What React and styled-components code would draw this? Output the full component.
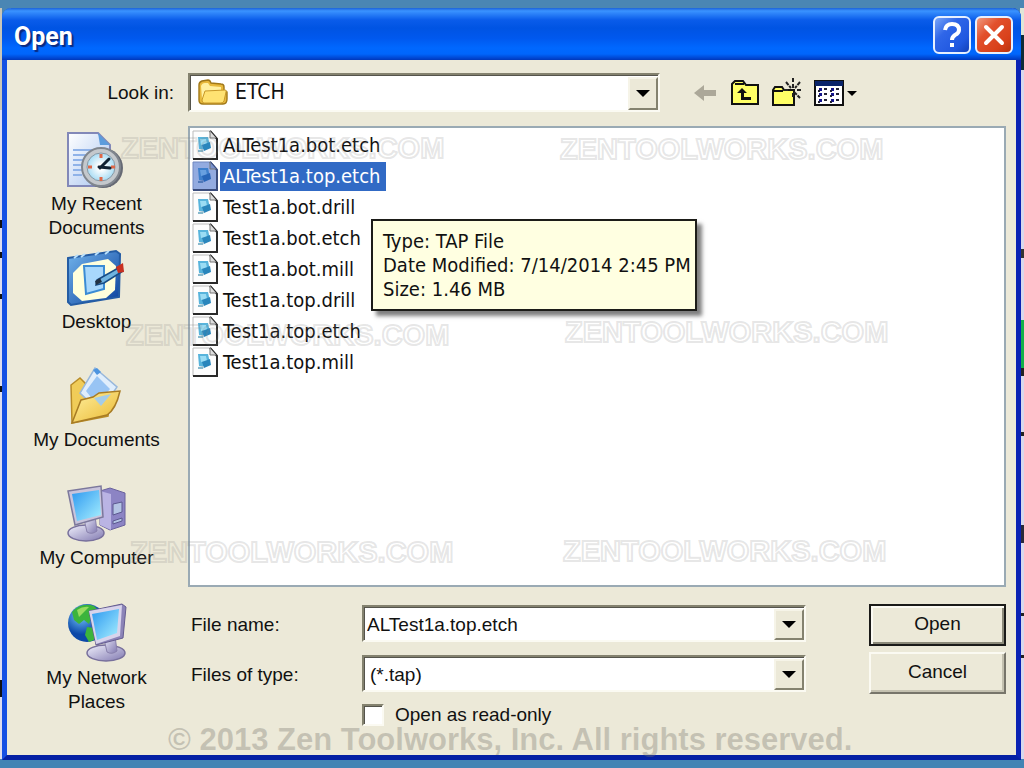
import React, { useState } from 'react';
import styled, { createGlobalStyle, css } from 'styled-components';

const GlobalStyle = createGlobalStyle`
    *, *::before, *::after{
        box-sizing: border-box;
    }
    body{
        margin: 0;
        background: #4a86b4;
        color: #111;
        font-family: 'Liberation Sans', Arial, sans-serif;
        font-size: 19px;
    }
    button, input, select{
        font: inherit;
        color: inherit;
    }
`

const Screen = styled.div`
    display: flex;
    flex-direction: column;
    min-height: 100vh;
    padding: 8px 3px 8px 2px;
    background:
        linear-gradient(#4a86b4, #4a86b4) top / 100% 8px no-repeat,
        linear-gradient(#4384b4, #4384b4) bottom / 100% 9px no-repeat,
        linear-gradient(#c9c6b8 0 110px, #dcdcee 110px 220px, #111 220px 228px, #dcdcee 228px 252px, #111 252px 258px, #dcdcee 258px 294px, #111 294px 299px, #dcdcee 299px 386px, #111 386px 392px, #dcdcee 392px 680px, #111 680px 697px, #dcdcee 697px) left / 2px 100% no-repeat,
        linear-gradient(#dfe6d8 0 35px, #0d2c38 35px 70px, #d8d8ec 70px 249px, #333 249px 258px, #d8d8ec 258px 320px, #12b04a 320px 368px, #222 368px 376px, #d8d8ec 376px 432px, #222 432px 436px, #d8d8ec 436px 525px, #2a2a3a 525px 543px, #d8d8ec 543px 613px, #222 613px 616px, #d8d8ec 616px 655px, #222 655px 658px, #d8d8ec 658px) right / 4px 100% no-repeat,
        #4a86b4;
`

const Dialog = styled.main`
    position: relative;
    display: flex;
    flex-direction: column;
    flex: 1;
    border: solid;
    border-width: 0 5px 5px 5px;
    border-color: #0a2fc0 #0a22b4 #0420a4 #1450e4;
    border-radius: 9px 9px 0 0;
    background: #ece9d8;
`

const TitleBar = styled.header`
    display: flex;
    align-items: center;
    gap: 4px;
    height: 52px;
    margin: 0 -5px;
    padding: 2px 8px 0 12px;
    border-radius: 9px 9px 0 0;
    background: linear-gradient(#1c62d8 0, #3a93ff 3px, #2a80f8 6px, #0a5cea 12px, #0054e3 20px, #0058ee 30px, #0068ff 40px, #0066fc 46px, #003fc8 51px, #0038b8 52px);
`

const Title = styled.h1`
    flex: 1;
    margin: 0;
    padding-top: 4px;
    color: #fff;
    font: bold 25px/32px Roboto, sans-serif;
    text-shadow: 2px 2px 1px #0a2a80;
`

const CaptionButton = styled.button`
    display: flex;
    align-items: center;
    justify-content: center;
    width: 38px;
    height: 38px;
    padding: 0;
    border: 2px solid #e6f0ff;
    border-radius: 6px;
    background: ${props => props.$close
        ? 'linear-gradient(135deg, #f09a80, #e2502c 35%, #d8401a 75%, #b83410)'
        : 'linear-gradient(135deg, #7aa6f8, #2f66e8 35%, #2058e0 75%, #1240b8)'};
`

const Body = styled.div`
    display: grid;
    grid-template-columns: 181px minmax(0, 1fr);
    grid-template-rows: 39px 1fr;
    row-gap: 14px;
    flex: 1;
    padding: 13px 10px 4px 0;
`

const LookLabel = styled.label`
    justify-self: end;
    align-self: center;
    padding-right: 14px;
`

const LookRow = styled.div`
    display: flex;
    align-items: center;
    gap: 33px;
`

const sunken = css`
    border: 2px solid;
    border-color: #84826f #fbfaf2 #fbfaf2 #84826f;
    box-shadow: inset 1px 1px 0 #55544c;
    background: #fff;
`

const Combo = styled.div`
    ${sunken}
    position: relative;
    display: flex;
    height: ${props => props.$height || '37px'};
    padding: 2px 0 0 2px;

    select, input{
        flex: 1;
        min-width: 0;
        padding: 0 0 0 ${props => props.$indent || '1px'};
        border: 0;
        outline: 0;
        background: none;
        appearance: none;
    }
    > svg:first-child{
        position: absolute;
        left: 7px;
        top: 3px;
    }
`

const ComboArrow = styled.span`
    display: flex;
    align-items: center;
    justify-content: center;
    width: 30px;
    border: 2px solid;
    border-color: #f6f4e8 #84826f #84826f #f6f4e8;
    background: #ece9d8;
    pointer-events: none;

    &::before{
        content: '';
        border: 7px solid transparent;
        border-top-color: #000;
        border-bottom: 0;
    }
`

const LookCombo = styled(Combo)`
    flex: 0 1 472px;
    select{
        padding-bottom: 3px;
        font-family: 'DejaVu Sans Condensed', sans-serif;
        font-size: 21px;
    }
`

const Tools = styled.div`
    display: flex;
    align-items: center;
    gap: 11px;
`

const ToolButton = styled.button`
    display: flex;
    padding: 0;
    border: 0;
    background: none;
`

const Places = styled.nav`
    display: flex;
    flex-direction: column;
    padding-top: 4px;
`

const Place = styled.a`
    display: flex;
    flex-direction: column;
    align-items: center;
    height: 118px;
    padding-right: 2px;
    color: inherit;
    line-height: 24px;
    text-align: center;
    text-decoration: none;
    white-space: pre-line;

    svg{
        display: block;
        flex: none;
        margin: 1px 0 3px;
    }
`

const Main = styled.div`
    display: flex;
    flex-direction: column;
    gap: 17px;
`

const FileList = styled.ul`
    position: relative;
    flex: 1;
    min-height: 280px;
    margin: 0;
    padding: 2px;
    border: 2px solid #9aaab4;
    background: #fff;
    list-style: none;
`

const FileRow = styled.li`
    display: flex;
    align-items: center;
    height: 31px;
    font: 20px/29px 'DejaVu Sans Condensed', sans-serif;

    svg{
        flex: none;
    }
    span{
        margin-left: 1px;
        padding: 0 6px 0 3px;
        color: ${props => props.$selected ? '#fff' : 'inherit'};
        background: ${props => props.$selected ? '#316ac5' : 'none'};
    }
`

const Tooltip = styled.div`
    position: absolute;
    left: 181px;
    top: 91px;
    padding: 8px 4px 8px 10px;
    border: 2px solid #1c1c18;
    background: #ffffe1;
    box-shadow: 5px 5px 4px rgba(0, 0, 0, .5);
    font: 20px/24px 'DejaVu Sans Condensed', sans-serif;
    white-space: nowrap;
    z-index: 2;

    p{
        margin: 0;
    }
`

const Footer = styled.form`
    display: flex;
    justify-content: space-between;
    gap: 63px;
    height: 147px;
`

const Fields = styled.div`
    display: grid;
    grid-template-columns: 174px minmax(0, 1fr);
    grid-template-rows: 37px 37px 24px;
    row-gap: 13px;
    align-content: start;
    align-items: center;
    flex: 1;
    padding-top: 1px;

    > label:not(:last-child){
        padding: 3px 0 0 3px;
    }
`

const CheckLine = styled.label`
    grid-column: 2;
    display: flex;
    align-items: center;
    gap: 11px;
    margin-top: -4px;
`

const Checkbox = styled.input`
    ${sunken}
    appearance: none;
    width: 22px;
    height: 22px;
    margin: 0;
    &:checked{
        background: radial-gradient(#111 40%, #fff 45%);
    }
`

const Buttons = styled.div`
    display: flex;
    flex-direction: column;
    gap: 6px;
    width: 137px;
`

const PushButton = styled.button`
    height: 42px;
    padding: 0 0 3px;
    border: 2px solid;
    border-color: ${props => props.$primary ? '#1a1a18' : '#fbfaf2 #77756a #77756a #fbfaf2'};
    box-shadow: ${props => props.$primary
        ? 'inset 2px 2px 0 #fbfaf2, inset -2px -2px 0 #8c8a7a'
        : 'inset -2px -2px 0 #c4c1b0'};
    background: #ece9d8;
`

// stamped over the whole dialog, never catches the mouse
const Stamp = styled.span`
    position: absolute;
    left: ${props => props.$x}px;
    top: ${props => props.$y}px;
    color: transparent;
    font: bold 29px/34px 'Liberation Sans', Arial, sans-serif;
    -webkit-text-stroke: 2px rgba(130, 130, 130, .2);
    white-space: nowrap;
    pointer-events: none;
`

const Copyright = styled.small`
    position: absolute;
    left: 161px;
    bottom: -3px;
    color: rgba(120, 118, 110, .34);
    font: bold 31px/36px 'Liberation Sans', Arial, sans-serif;
    white-space: nowrap;
    pointer-events: none;
`

const FolderIcon = () => (
    <svg width="32" height="28" viewBox="0 0 32 28">
        <path d="M2 7q0-3 3-4l6-1q2 0 3 3l10 1q3 0 3 3v4l3 1v7q0 5-4 5H6q-4 0-4-4z" fill="#e8b93c" stroke="#a07818" strokeWidth="1.4" />
        <path d="M4 8q1-3 4-3h3l2 3 11 1v4L9 14 5 21z" fill="#fff0a0" />
        <path d="M8 13l20-1q2 0 1 2l-2 9q-1 2-3 2H7q-2 0-2-3z" fill="#ffe272" stroke="#c89828" strokeWidth="1" />
    </svg>
)

const BackIcon = () => (
    <svg width="26" height="30" viewBox="0 0 26 30">
        <path d="M1 15l10-8v5h12v6H11v5z" fill="#aca899" />
    </svg>
)

const UpIcon = () => (
    <svg width="30" height="30" viewBox="0 0 30 30">
        <path d="M2 26V6l3-3h8l3 4h12v19z" fill="#ffff66" stroke="#111" strokeWidth="2" />
        <path d="M5 6h9" stroke="#111" strokeWidth="2" />
        <path d="M7 15l5-5 5 5zM11 14h3v5h7v3H11z" fill="#111" />
    </svg>
)

const NewFolderIcon = () => (
    <svg width="32" height="32" viewBox="0 0 32 32">
        <path d="M2 28V13l2-3h7l2 3h10v15z" fill="#ffff66" stroke="#111" strokeWidth="2" />
        <path d="M3 14h9" stroke="#111" strokeWidth="2" />
        <path d="M22 1v4M22 7v4M15 5l5 6M29 5l-5 6M13 13h4M26 13h5M23 15l6 6M22 16v4" stroke="#222" strokeWidth="2" strokeDasharray="4 1" />
    </svg>
)

const ViewIcon = () => (
    <svg width="44" height="30" viewBox="0 0 44 30">
        <rect x="1" y="3" width="28" height="24" fill="#fff" stroke="#111" strokeWidth="2" />
        <rect x="1" y="3" width="28" height="5" fill="#0a246a" />
        {[10, 15, 21].map(y => [5, 17].map(x => (
            <g key={`${x}-${y}`}>
                <rect x={x} y={y} width="3" height="3" fill="#14148c" />
                <path d={`M${x - 1} ${y + 3}h2M${x + 5} ${y + 1}h3`} stroke="#223" strokeWidth="2" />
            </g>
        )))}
        <path d="M33 13h10l-5 5z" fill="#000" />
    </svg>
)

const FileIcon = ({ selected }) => (
    <svg width="27" height="31" viewBox="0 0 27 31">
        <path d="M1 1h18l6 7v21H1z" fill={selected ? '#93abe0' : '#fdfdfd'} stroke={selected ? '#7088c0' : '#bbb'} />
        <path d="M18 1l7 8v20H1" fill="none" stroke={selected ? '#3a4c7c' : '#2a2a2a'} strokeWidth="2" />
        <path d="M18 1v7h6" fill={selected ? '#7890cc' : '#ddd'} stroke="#777" />
        <path d="M6 7h10l2 9-3 3H7z" fill={selected ? '#3f80cc' : '#58b4dc'} />
        <path d="M8 9h6l1 5-6 1z" fill={selected ? '#68a0e0' : '#9adcf4'} />
        <path d="M10 15l8-3 1 6-7 3z" fill={selected ? '#2866b8' : '#2a86bc'} />
        <path d="M6 20l6-1-1 3H6z" fill={selected ? '#5078b8' : '#88b8cc'} />
    </svg>
)

const RecentIcon = () => (
    <svg width="60" height="58" viewBox="0 0 60 58">
        <defs>
            <linearGradient id="paper" x2="1" y2="1"><stop stopColor="#fff" /><stop offset="1" stopColor="#a8c4f0" /></linearGradient>
            <radialGradient id="clock"><stop offset=".2" stopColor="#fff" /><stop offset="1" stopColor="#a8dcf4" /></radialGradient>
        </defs>
        <path d="M1 2h30l12 12v41H1z" fill="url(#paper)" stroke="#8288b8" strokeWidth="2" />
        <path d="M31 2l12 12H33z" fill="#5c9cdc" />
        <path d="M6 19h28M6 24h22M6 29h12M6 34h10M6 39h9M6 44h9" stroke="#8fb2e8" strokeWidth="2" />
        <circle cx="36" cy="37" r="20" fill="#666a74" />
        <circle cx="34" cy="36" r="19" fill="#c4c8cc" stroke="#80868e" strokeWidth="2" />
        <circle cx="34" cy="36" r="14" fill="url(#clock)" stroke="#8898a4" />
        <path d="M34 23v4M34 46v4M21 36h4M44 36h4" stroke="#e06848" strokeWidth="3" />
        <path d="M33 37l9-9M32 36l11 1" stroke="#123" strokeWidth="3" strokeLinecap="round" />
    </svg>
)

const DesktopIcon = () => (
    <svg width="60" height="58" viewBox="0 0 60 58">
        <defs>
            <linearGradient id="desk" x2="1" y2="1"><stop stopColor="#72b4ec" /><stop offset="1" stopColor="#0a409c" /></linearGradient>
        </defs>
        <path d="M1 9l48-7 4 3-1 43-48 8-3-3z" fill="url(#desk)" stroke="#245ca4" strokeWidth="2" />
        <path d="M7 9l4-3M14 8l4-3M28 6l4-3M38 5l4-3" stroke="#b8e0fc" strokeWidth="2" />
        <path d="M15 15l26-5 8 7-1 24-9 8-24 3-9-8V24z" fill="#ffffdc" />
        <path d="M17 17h20v23l-18 5z" fill="#a8d8fc" stroke="#3b8cd4" strokeWidth="2" />
        <path d="M30 31l23-13 3 4-19 12-8 2z" fill="#70b4e0" stroke="#174c84" strokeWidth="1.5" />
        <path d="M49 18l7-4 1 9-6 1z" fill="#c83020" />
        <path d="M28 32l5-3 2 4-6 3z" fill="#234" />
    </svg>
)

const DocumentsIcon = () => (
    <svg width="60" height="58" viewBox="0 0 60 58">
        <defs>
            <linearGradient id="folder" x2="1" y2="1"><stop stopColor="#fff0a0" /><stop offset="1" stopColor="#eab830" /></linearGradient>
        </defs>
        <path d="M4 18l9-7 8 8 24 4-4 26-36 7z" fill="#f0cc58" stroke="#b88c28" strokeWidth="1.5" />
        <path d="M28 1l22 19-17 25-20-19z" fill="#e0eefc" stroke="#98b8dc" strokeWidth="1.5" />
        <path d="M30 9l13 13-13 16-11-14z" fill="#98c4f4" />
        <path d="M26 3l4-2 4 4-4 3z" fill="#4c94e0" />
        <path d="M14 33l12-3 6-4 21-2q-4 18-13 24L5 56z" fill="url(#folder)" stroke="#a87c24" strokeWidth="1.5" />
        <path d="M27 31l17-4-10 12z" fill="#a4cce8" />
    </svg>
)

const ScreenDefs = () => (
    <defs>
        <linearGradient id="lcd" x2="1" y2="1"><stop stopColor="#2c98f0" /><stop offset="1" stopColor="#a8f0ff" /></linearGradient>
        <linearGradient id="shell" x2="1" y2="1"><stop stopColor="#f0f0fc" /><stop offset="1" stopColor="#8078b0" /></linearGradient>
    </defs>
)

const ComputerIcon = () => (
    <svg width="60" height="58" viewBox="0 0 60 58">
        <ScreenDefs />
        <path d="M33 6l10-3 15 5v32l-15 5-10-5z" fill="#8c84c4" stroke="#6a629c" />
        <path d="M33 6l11 3v36l-11-5z" fill="#bab4e4" />
        <path d="M46 19l9-2v10l-9 3zM46 36l9-3v3l-9 3z" fill="#b4c4e4" stroke="#5c5890" />
        <ellipse cx="19" cy="48" rx="18" ry="8" fill="url(#shell)" stroke="#78709c" strokeWidth="1.5" />
        <path d="M17 34l11-3 2 15q-5 4-10 1z" fill="url(#shell)" stroke="#8880ac" />
        <path d="M1 6l33-5 2 31-28 8z" fill="#c8c4dc" stroke="#7c789c" strokeWidth="1.5" />
        <path d="M5 9l27-4 2 25-24 6z" fill="url(#lcd)" />
    </svg>
)

const NetworkIcon = () => (
    <svg width="60" height="60" viewBox="0 0 60 60">
        <defs>
            <radialGradient id="globe" cx=".35" cy=".3"><stop stopColor="#74c8fc" /><stop offset="1" stopColor="#0c48a8" /></radialGradient>
        </defs>
        <circle cx="20" cy="20" r="19" fill="url(#globe)" />
        <path d="M5 9Q14-1 27 3l5 5-7 5-3 8-5-4-5 4-5-4zM20 24l8 1-1 12-5 2-4-7z" fill="#3cb43c" />
        <path d="M10 7q6-4 12-3l-5 5-5 5z" fill="#98dc60" />
        <ellipse cx="39" cy="50" rx="19" ry="8" fill="url(#shell)" stroke="#78709c" strokeWidth="1.5" />
        <path d="M37 36l11-3 2 15q-5 4-10 1z" fill="url(#shell)" stroke="#8880ac" />
        <path d="M22 8l33-7 4 3-3 31-27 7z" fill="#8c84b8" stroke="#645c90" />
        <path d="M22 8l33-6-2 31-24 8z" fill="#d8d4ec" />
        <path d="M25 11l27-5-2 24-20 7z" fill="url(#lcd)" />
    </svg>
)

const places = [
    ['My Recent\nDocuments', RecentIcon],
    ['Desktop', DesktopIcon],
    ['My Documents', DocumentsIcon],
    ['My Computer', ComputerIcon],
    ['My Network\nPlaces', NetworkIcon],
]

const files = [
    'ALTest1a.bot.etch',
    'ALTest1a.top.etch',
    'Test1a.bot.drill',
    'Test1a.bot.etch',
    'Test1a.bot.mill',
    'Test1a.top.drill',
    'Test1a.top.etch',
    'Test1a.top.mill',
]

const stamps = [[114, 123], [553, 124], [119, 310], [558, 307], [123, 527], [556, 526]]

export default function App() {
    const [fileName, setFileName] = useState('ALTest1a.top.etch')

    return (
        <Screen>
            <GlobalStyle />
            <Dialog>
                <TitleBar>
                    <Title>Open</Title>
                    <CaptionButton aria-label="Help">
                        <svg width="26" height="30" viewBox="0 0 26 30" fill="none" stroke="#fff" strokeWidth="4">
                            <path d="M6 10q1-6 7-6 7 0 7 6 0 3-4 5-3 2-3 5M13 23v4" />
                        </svg>
                    </CaptionButton>
                    <CaptionButton $close aria-label="Close">
                        <svg width="26" height="26" viewBox="0 0 26 26" stroke="#fff" strokeWidth="4" strokeLinecap="round">
                            <path d="M5 5l16 16M21 5L5 21" />
                        </svg>
                    </CaptionButton>
                </TitleBar>

                <Body>
                    <LookLabel htmlFor="look">Look in:</LookLabel>
                    <LookRow>
                        <LookCombo $height="39px" $indent="43px">
                            <FolderIcon />
                            <select id="look">
                                <option>ETCH</option>
                            </select>
                            <ComboArrow />
                        </LookCombo>
                        <Tools>
                            <ToolButton aria-label="Back"><BackIcon /></ToolButton>
                            <ToolButton aria-label="Up one level"><UpIcon /></ToolButton>
                            <ToolButton aria-label="New folder"><NewFolderIcon /></ToolButton>
                            <ToolButton aria-label="View"><ViewIcon /></ToolButton>
                        </Tools>
                    </LookRow>

                    <Places>
                        {places.map(([name, Icon]) => (
                            <Place href="#" key={name}>
                                <Icon />
                                {name}
                            </Place>
                        ))}
                    </Places>

                    <Main>
                        <FileList>
                            {files.map(name => (
                                <FileRow key={name} $selected={name === 'ALTest1a.top.etch'}>
                                    <FileIcon selected={name === 'ALTest1a.top.etch'} />
                                    <span>{name}</span>
                                </FileRow>
                            ))}
                            <Tooltip role="tooltip">
                                <p>Type: TAP File</p>
                                <p>Date Modified: 7/14/2014 2:45 PM</p>
                                <p>Size: 1.46 MB</p>
                            </Tooltip>
                        </FileList>

                        <Footer onSubmit={e => e.preventDefault()}>
                            <Fields>
                                <label htmlFor="name">File name:</label>
                                <Combo>
                                    <input id="name" value={fileName} onChange={e => setFileName(e.target.value)} />
                                    <ComboArrow />
                                </Combo>
                                <label htmlFor="type">Files of type:</label>
                                <Combo $indent="4px">
                                    <select id="type">
                                        <option>(*.tap)</option>
                                    </select>
                                    <ComboArrow />
                                </Combo>
                                <CheckLine>
                                    <Checkbox type="checkbox" />
                                    Open as read-only
                                </CheckLine>
                            </Fields>
                            <Buttons>
                                <PushButton $primary type="submit">Open</PushButton>
                                <PushButton type="button">Cancel</PushButton>
                            </Buttons>
                        </Footer>
                    </Main>
                </Body>

                {stamps.map(([x, y]) => (
                    <Stamp key={`${x}-${y}`} $x={x} $y={y} aria-hidden="true">ZENTOOLWORKS.COM</Stamp>
                ))}
                <Copyright>© 2013 Zen Toolworks, Inc. All rights reserved.</Copyright>
            </Dialog>
        </Screen>
    )
}
